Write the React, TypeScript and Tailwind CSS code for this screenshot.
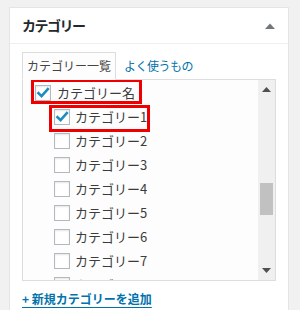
const Check = () => (
  <svg width="14" height="14" viewBox="0 0 14 14" className="absolute left-[0px] top-[0px]">
    <path d="M2.5 7.2 L5.6 10.2 L11.8 3.2" fill="none" stroke="#1e8cbe" strokeWidth="2.6" strokeLinecap="square" />
  </svg>
);

const Box = ({ checked }: { checked?: boolean }) => (
  <span className="relative inline-block w-[16px] h-[16px] shrink-0 border border-[#b4b9be] bg-white shadow-[inset_0_1px_2px_rgba(0,0,0,0.1)]">
    {checked && <Check />}
  </span>
);

const items = ["カテゴリー1", "カテゴリー2", "カテゴリー3", "カテゴリー4", "カテゴリー5", "カテゴリー6", "カテゴリー7", "カテゴリー8"];

export default function App() {
  return (
    <div
      className="w-[300px] h-[310px] overflow-hidden bg-[#f1f1f1] pt-[7px] pl-[9px]"
      style={{ fontFamily: '"Noto Sans CJK JP", "Noto Sans", sans-serif' }}
    >
      <div className="w-[280px] h-[320px] border border-[#e5e5e5] bg-white">
        <div className="h-[36px] flex items-center justify-between px-[12px] border-b border-[#eeeeee]">
          <span className="text-[14px] font-bold tracking-[-1.5px] text-[#23282d]">カテゴリー</span>
          <svg width="10" height="8" viewBox="0 0 10 8" className="mr-[1px]">
            <path d="M0 7 L5 1.5 L10 7 Z" fill="#72777c" />
          </svg>
        </div>
        <div className="px-[12px] pt-[8px]">
          <div className="flex items-end">
            <div className="relative z-10 -mb-[1px] h-[28px] px-[4px] flex items-center border border-[#dddddd] border-b-[#fdfdfd] bg-[#fdfdfd] text-[12px] text-[#444]">
              カテゴリー一覧
            </div>
            <div className="h-[27px] flex items-center px-[8px] text-[12px] tracking-[-0.5px] text-[#0073aa]">よく使うもの</div>
          </div>
          <div className="flex h-[202px] border border-[#dddddd] bg-[#fdfdfd]">
            <div className="relative flex-1 overflow-hidden pt-[1px] text-[13px] text-[#3c3c3c]">
              <div className="h-[24px] flex items-center gap-[6px] pl-[12px]">
                <Box checked />
                <span>カテゴリー名</span>
              </div>
              {items.map((t, i) => (
                <div key={t} className="h-[24px] flex items-center gap-[5px] pl-[31px]">
                  <Box checked={i === 0} />
                  <span>{t}</span>
                </div>
              ))}
              <div className="absolute left-[8px] top-[-1px] w-[111px] h-[25px] border-[3px] border-[#ee0000]" />
              <div className="absolute left-[26px] top-[25px] w-[101px] h-[27px] border-[3px] border-[#ee0000]" />
            </div>
            <div className="w-[17px] flex flex-col items-center bg-[#f0f0f0]">
              <svg width="9" height="5" viewBox="0 0 9 5" className="mt-[7px]">
                <path d="M0 5 L4.5 0 L9 5 Z" fill="#505050" />
              </svg>
              <div className="mt-[91px] w-[13px] h-[32px] bg-[#c1c1c1]" />
              <div className="flex-1" />
              <svg width="9" height="5" viewBox="0 0 9 5" className="mb-[7px]">
                <path d="M0 0 L9 0 L4.5 5 Z" fill="#505050" />
              </svg>
            </div>
          </div>
          <div className="mt-[9px] text-[12px] font-semibold text-[#0073aa] underline underline-offset-[3px]">
            + 新規カテゴリーを追加
          </div>
        </div>
      </div>
    </div>
  );
}
